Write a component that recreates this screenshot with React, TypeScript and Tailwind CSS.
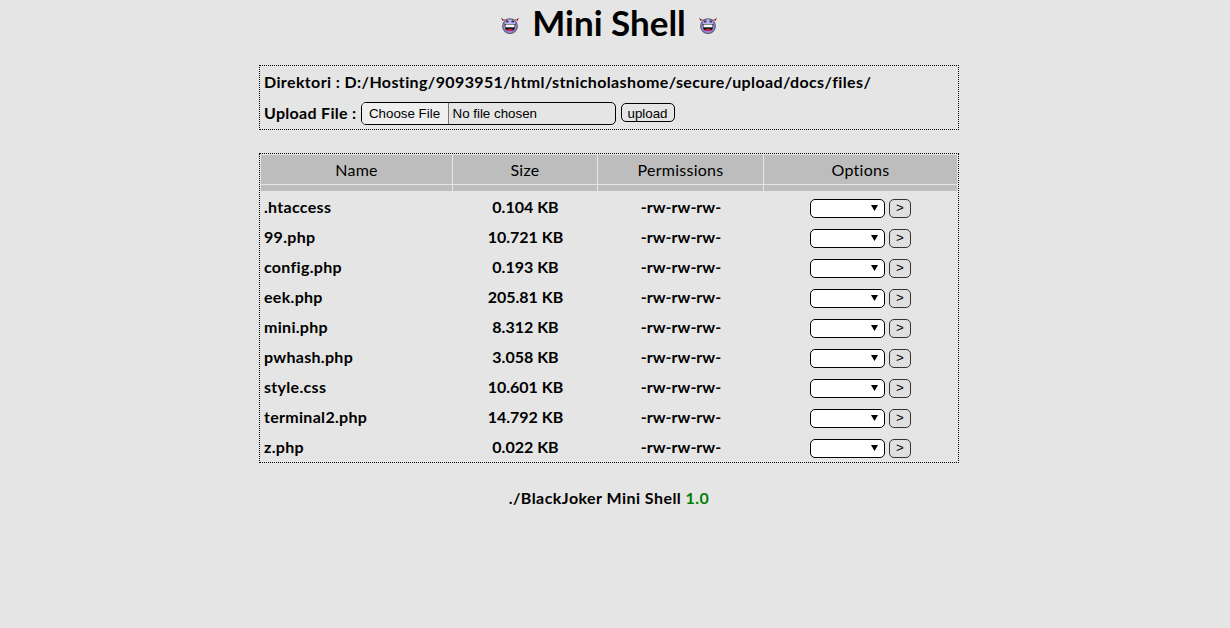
import React from "react";

const files = [
  [".htaccess", "0.104 KB"],
  ["99.php", "10.721 KB"],
  ["config.php", "0.193 KB"],
  ["eek.php", "205.81 KB"],
  ["mini.php", "8.312 KB"],
  ["pwhash.php", "3.058 KB"],
  ["style.css", "10.601 KB"],
  ["terminal2.php", "14.792 KB"],
  ["z.php", "0.022 KB"],
];

const cols = "grid grid-cols-[192px_145px_166px_1fr]";
const font = { fontFamily: 'Lato, "Noto Sans", sans-serif' };

function Devil() {
  return (
    <svg width="18" height="17" viewBox="0 0 18 17" className="mt-[6px] block">
      <path d="M0 0.5 L1.5 4 L5 2 L2.5 2.5 Z M18 0.5 L16.5 4 L13 2 L15.5 2.5 Z" fill="#a01828" />
      <circle cx="9" cy="9.2" r="7.3" fill="#9484e4" stroke="#5f6070" strokeWidth="1.2" />
      <ellipse cx="9" cy="5.5" rx="5" ry="3" fill="#bdb2f2" />
      <rect x="5" y="3.5" width="2.5" height="2" fill="#3a3a5a" />
      <rect x="10.5" y="3.5" width="2.5" height="2" fill="#3a3a5a" />
      <path d="M3.5 7 H14.5 L13.5 12.5 Q9 15.5 4.5 12.5 Z" fill="#111" />
      <rect x="4.5" y="7.5" width="9" height="2.8" fill="#fff" />
      <path d="M5.5 13 Q9 10.5 12.5 13 Q9 14.8 5.5 13 Z" fill="#e0203a" />
    </svg>
  );
}

export default function App() {
  return (
    <div className="min-h-[628px] bg-[#e5e5e5] text-black" style={font}>
      <div className="w-[1218px]">
        <div className="flex h-[45px] items-center justify-center gap-[13px]">
          <Devil />
          <h1 className="text-[35px] leading-none font-bold">Mini Shell</h1>
          <Devil />
        </div>

        <div className="mx-auto mt-5 flex h-[65px] w-[700px] flex-col border border-dotted border-black px-1 text-[16px] font-bold tracking-[0.38px]">
          <div className="flex h-[31px] items-center">
            Direktori : D:/Hosting/9093951/html/stnicholashome/secure/upload/docs/files/
          </div>
          <div className="flex h-[32px] items-center gap-1 pt-[1px]">
            <span className="relative -top-[1px] tracking-[0.3px]">Upload File :</span>
            <div className="flex h-[23px] w-[255px] items-center overflow-hidden rounded-[5px] border border-black text-[13.33px] font-normal tracking-normal [font-family:'Liberation_Sans',sans-serif]">
              <span className="flex h-full w-[87px] items-center justify-center border-r border-[#777] bg-[#efefef]">
                Choose File
              </span>
              <span className="pl-1">No file chosen</span>
            </div>
            <button className="mb-[2px] ml-[1px] h-[19px] w-[54px] rounded-[5px] border border-black bg-[#e5e5e5] text-[13.33px] font-normal tracking-normal [font-family:'Liberation_Sans',sans-serif]">
              upload
            </button>
          </div>
        </div>

        <div className="mx-auto mt-[23px] h-[310px] w-[700px] border border-dotted border-black px-px pt-px text-[16px]">
          <div className={`${cols} bg-[#bdbdbd] text-center tracking-[0.25px]`}>
            {["Name", "Size", "Permissions", "Options"].map((h, i) => (
              <div key={h} className={i < 3 ? "border-r border-[#e5e5e5]" : ""}>
                <div className="flex h-[30px] items-center justify-center border-b border-[#e5e5e5]">{h}</div>
                <div className="h-[6px]" />
              </div>
            ))}
          </div>
          <div className="pt-[1px] font-bold">
            {files.map(([name, size]) => (
              <div key={name} className={`${cols} h-[30px] items-center text-center`}>
                <div className="pl-[3px] text-left tracking-[0.3px]">{name}</div>
                <div>{size}</div>
                <div>-rw-rw-rw-</div>
                <div className="flex items-center justify-center gap-1 pt-[2px]">
                  <div className="relative h-[19px] w-[75px]">
                    <select className="block h-full w-full appearance-none rounded-[5px] border border-black bg-white text-[12px]" />
                    <svg width="7" height="6" viewBox="0 0 7 6" className="absolute top-[6px] right-[7px]">
                      <path d="M0 0 H7 L3.5 6 Z" fill="#000" />
                    </svg>
                  </div>
                  <button className="h-[19px] w-[22px] rounded-[5px] border border-[#333] bg-[#e0e0e0] text-[13.33px] leading-none font-normal [font-family:'Liberation_Sans',sans-serif]">
                    &gt;
                  </button>
                </div>
              </div>
            ))}
          </div>
        </div>

        <div className="mt-[23px] text-center text-[16px] font-bold tracking-[0.45px]">
          ./BlackJoker Mini Shell <span className="text-[#008000]">1.0</span>
        </div>
      </div>
    </div>
  );
}
